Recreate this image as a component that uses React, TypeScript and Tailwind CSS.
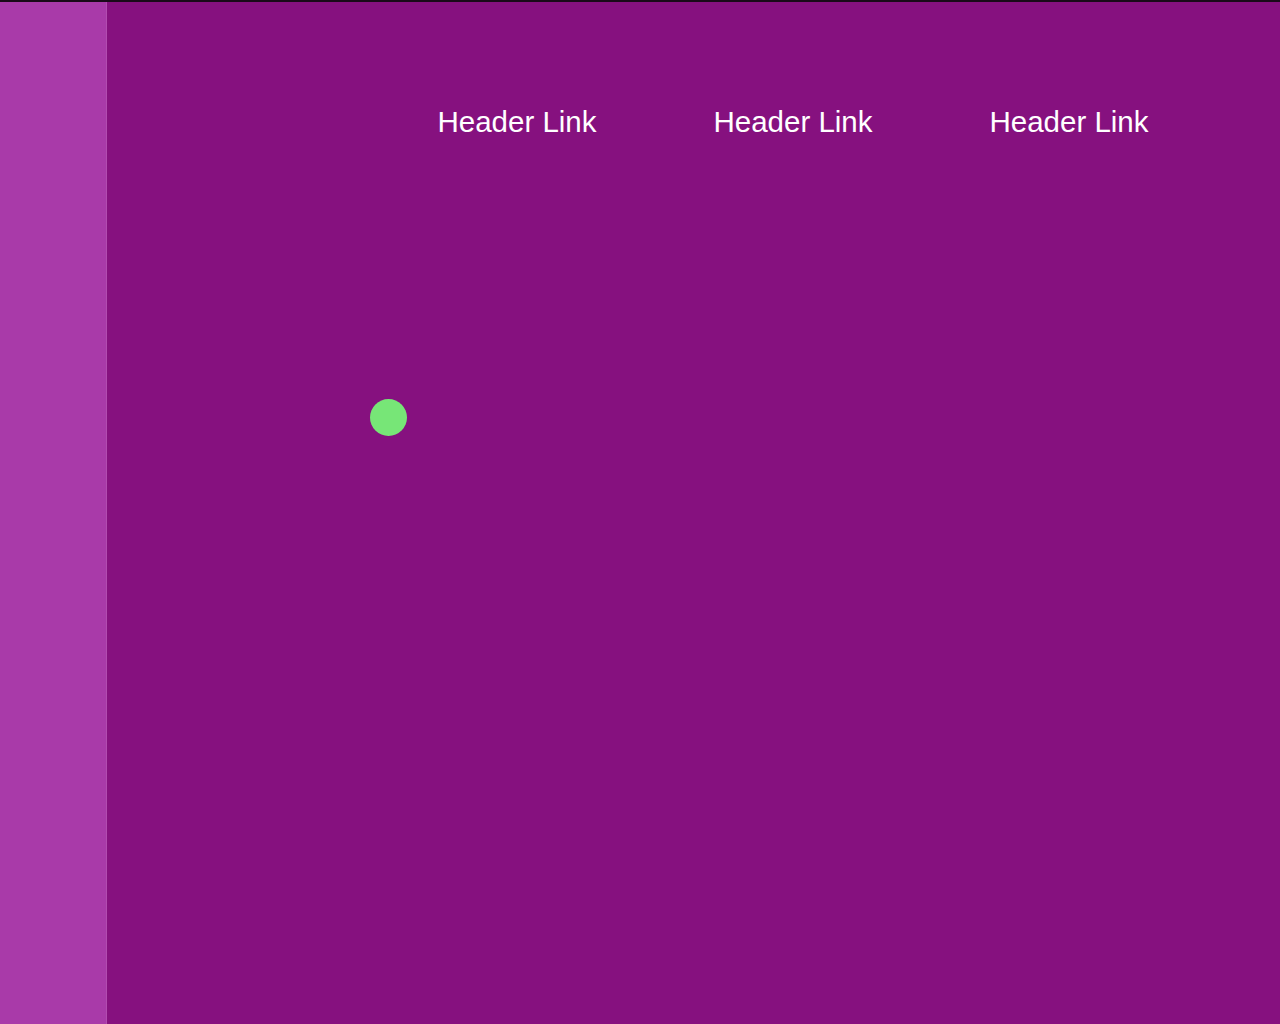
export default function App() {
  const links = ['Header Link', 'Header Link', 'Header Link']

  return (
    <div
      className="flex h-[1024px] w-full border-t-2 border-[#1a0a18] bg-[#86117f]"
      style={{ fontFamily: '"Liberation Sans", Arial, sans-serif' }}
    >
      <aside className="w-[107px] shrink-0 bg-[#a93aa9] border-r border-[#b24cb0]" />
      <main className="flex-1 flex flex-col">
        <header className="flex pl-[272px] pt-[103px]">
          {links.map((label, i) => (
            <a key={i} href="#" className="w-[276px] text-center text-[29.5px] leading-[33px] text-white">
              {label}
            </a>
          ))}
        </header>
        <div className="ml-[263px] mt-[261px] h-[37px] w-[37px] rounded-full bg-[#77e677]" />
      </main>
    </div>
  )
}
